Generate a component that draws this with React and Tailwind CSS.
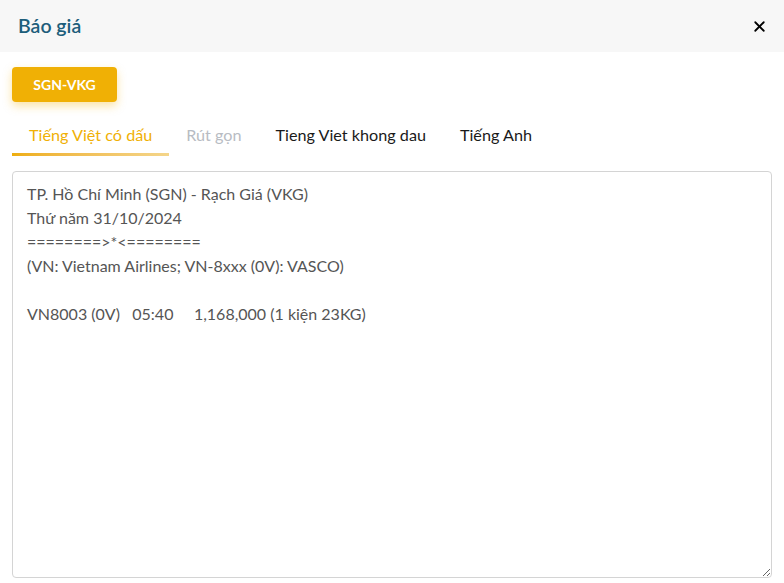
import { X } from "lucide-react";

const quote = `TP. Hồ Chí Minh (SGN) - Rạch Giá (VKG)
Thứ năm 31/10/2024
========>*<========
(VN: Vietnam Airlines; VN-8xxx (0V): VASCO)

VN8003 (0V)   05:40     1,168,000 (1 kiện 23KG)`;

export default function App() {
  const tabs = [
    { name: "Tiếng Việt có dấu", active: true },
    { name: "Rút gọn", muted: true },
    { name: "Tieng Viet khong dau" },
    { name: "Tiếng Anh" },
  ];

  return (
    <div className="w-[784px] h-[583px] bg-white font-['Lato',sans-serif] flex flex-col overflow-hidden">
      {/* Header */}
      <div className="h-[52px] bg-[#f7f7f7] flex items-center justify-between pl-[18px] pr-[16px] shrink-0">
        <span className="text-[19.5px] font-semibold text-[#1d5e7b]">Báo giá</span>
        <X className="w-[17px] h-[17px] text-black" strokeWidth={2.5} />
      </div>

      <div className="flex flex-col px-[12px] pt-[15px] flex-1 min-h-0 pb-[5px]">
        <div>
          <button className="h-[35px] w-[105px] rounded-[4px] bg-[#f0b005] text-white text-[14px] font-bold shadow-[0_4px_10px_rgba(240,176,5,0.35)]">
            SGN-VKG
          </button>
        </div>

        {/* Tabs */}
        <div className="flex mt-[11px] h-[44px]">
          {tabs.map((t) => (
            <div
              key={t.name}
              className={
                "relative px-[17px] flex items-center text-[16.2px] " +
                (t.active
                  ? "text-[#f0b005]"
                  : t.muted
                  ? "text-[#b8bcc3]"
                  : "text-[#1a1a1a]")
              }
            >
              {t.name}
              {t.active && (
                <span className="absolute left-0 right-0 bottom-[1px] h-[3px] bg-gradient-to-r from-[#eeae0a] to-[#f4d58a]" />
              )}
            </div>
          ))}
        </div>

        <textarea
          defaultValue={quote}
          className="mt-[14px] flex-1 w-full border border-[#d4d4d4] rounded-[4px] pl-[14px] pr-[15px] pt-[10px] text-[16px] leading-[24px] text-[#555555] font-['Lato',sans-serif] outline-none"
        />
      </div>
    </div>
  );
}
